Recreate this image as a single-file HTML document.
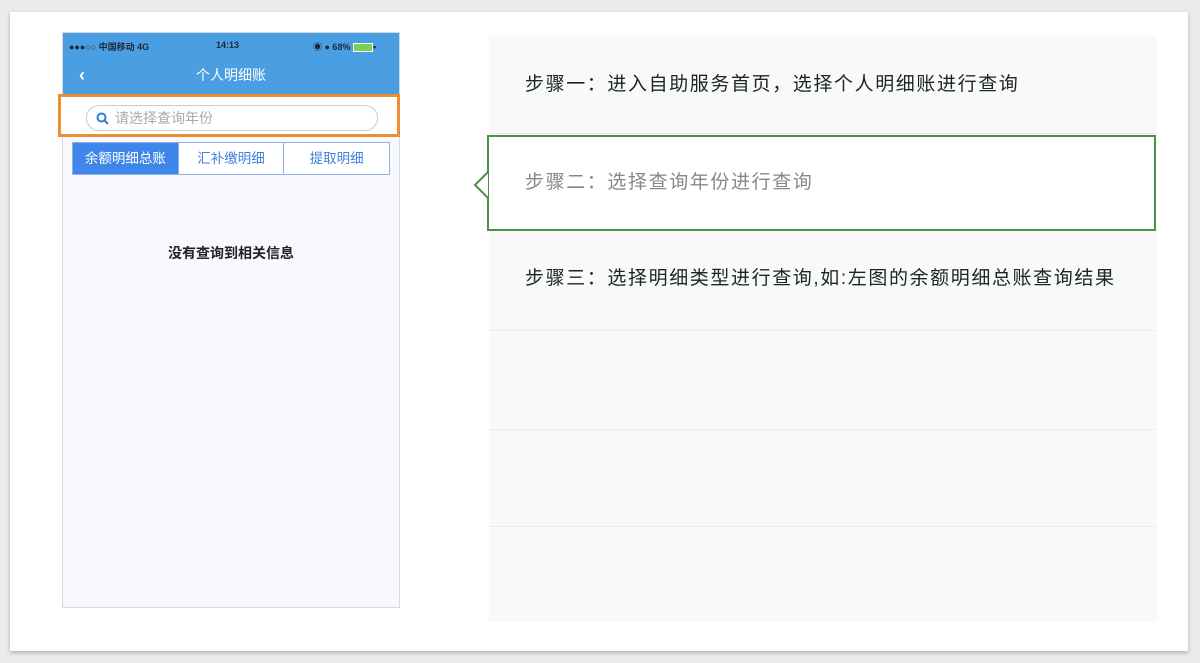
<!DOCTYPE html><html><head><meta charset="utf-8"><style>
body{margin:0;width:1200px;height:663px;background:#ebebeb;position:relative;overflow:hidden;font-family:"Liberation Sans","Noto Sans CJK SC",sans-serif}
.card{position:absolute;left:10px;top:12px;width:1178px;height:639px;background:#fff;box-shadow:0 2px 4px rgba(0,0,0,.25)}
.ph{position:absolute;left:62px;top:32px;width:338px;height:576px;background:#f9f8fd;border:1px solid #d6d8e4;box-sizing:border-box}
.hd{position:absolute;left:0;top:0;width:100%;height:61px;background:#4a9fe3;color:#fff}
.sb{position:absolute;top:7px;font-size:9px;color:#1b2a3a;font-weight:bold}
.or{position:absolute;left:58px;top:94px;width:342px;height:43px;border:3px solid #ee8e33;box-sizing:border-box;background:#fff}
.sr{position:absolute;left:25px;top:8px;width:292px;height:26px;border:1px solid #ccc;border-radius:13px;box-sizing:border-box;font-size:14px;color:#aaa;line-height:24px;padding-left:28px}
.tabs{position:absolute;left:72px;top:142px;width:318px;height:33px;border:1px solid #8fb3e8;box-sizing:border-box;display:flex;background:#fff}
.tabs div{flex:1;text-align:center;line-height:31px;font-size:13.5px;color:#3e7fd8;border-left:1px solid #8fb3e8}
.tabs div:first-child{background:#3f86ea;color:#fff;border:none}
.rp{position:absolute;left:489px;top:36px;width:668px;height:586px;background:#f9f9fa}
.row{position:absolute;left:0;width:668px;border-bottom:1px solid #ebebeb;font-size:19px;letter-spacing:1.6px;color:#1a2626;padding-left:36px;box-sizing:border-box}
.gb{position:absolute;left:487px;top:135px;width:669px;height:96px;border:2px solid #4d9147;box-sizing:border-box;background:#fff;font-size:19px;letter-spacing:1.6px;color:#888;line-height:92px;padding-left:36px}
</style></head><body>
<div class="card"></div>
<div class="ph">
 <div class="hd">
  <span class="sb" style="left:6px">●●●○○ 中国移动 4G</span>
  <span class="sb" style="left:153px">14:13</span>
  <span class="sb" style="left:250px">◉ ● 68% <span style="display:inline-block;width:18px;height:7px;background:#7ad04f;border:1px solid #fff;vertical-align:middle"></span>•</span>
  <span style="position:absolute;left:16px;top:32px;font-size:18px;font-weight:bold">‹</span>
  <span style="position:absolute;left:0;width:100%;top:32px;text-align:center;font-size:14px">个人明细账</span>
 </div>
 <div style="position:absolute;left:0;width:100%;top:210px;text-align:center;font-size:14px;color:#222;font-weight:bold">没有查询到相关信息</div>
</div>
<div class="or"><div class="sr"><svg style="position:absolute;left:9px;top:6px" width="13" height="13" viewBox="0 0 13 13"><circle cx="5.5" cy="5.5" r="4" fill="none" stroke="#2c7fd6" stroke-width="2"/><path d="M8.5 8.5L12 12" stroke="#2c7fd6" stroke-width="2"/></svg>请选择查询年份</div></div>
<div class="tabs"><div>余额明细总账</div><div>汇补缴明细</div><div>提取明细</div></div>
<div class="rp">
 <div class="row" style="top:0;height:98px;line-height:98px">步骤一：进入自助服务首页，选择个人明细账进行查询</div>
 <div class="row" style="top:196px;height:99px;line-height:94px">步骤三：选择明细类型进行查询,如:左图的余额明细总账查询结果</div>
 <div class="row" style="top:295px;height:99px"></div>
 <div class="row" style="top:394px;height:97px"></div>
</div>
<div class="gb">步骤二：选择查询年份进行查询</div>
<svg style="position:absolute;left:472px;top:170px" width="18" height="30"><path d="M16 2 L3 15 L16 28" fill="#fff" stroke="#4d9147" stroke-width="2"/></svg>
</body></html>
